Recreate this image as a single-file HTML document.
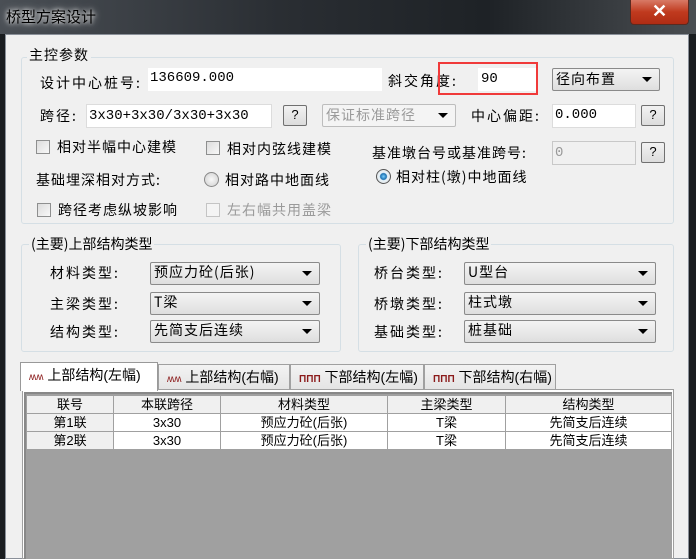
<!DOCTYPE html><html><head><meta charset="utf-8"><style>
*{margin:0;padding:0;box-sizing:border-box}
body{width:696px;height:559px;overflow:hidden;background:#1a1d20;font-family:"Liberation Sans","Noto Sans CJK SC",sans-serif;font-size:14px;color:#000;position:relative}
.a{position:absolute;white-space:nowrap}
.t{font-family:"Noto Sans CJK SC","WenQuanYi Zen Hei",sans-serif;font-size:14px;line-height:16px;letter-spacing:1px}
.m{font-family:"Liberation Mono","Noto Sans CJK SC",monospace;font-size:14px;line-height:16px}
.in{background:#fff;border:1px solid #dcdcdc}
.grp{border:1px solid #d5dfe5;border-radius:3px}
.lg{background:#f0f0f0;padding:0 2px}
.btn{border:1px solid #707070;border-radius:2px;background:linear-gradient(#f2f2f2,#dcdcdc);text-align:center;font-size:13px;line-height:18px}
.dd{border:1px solid #8a8a8a;border-radius:2px;background:linear-gradient(#f4f4f4,#dedede);padding-left:3px;line-height:19px}
.dd:after{content:"";position:absolute;right:7px;top:8px;border:5px solid transparent;border-top:5px solid #000;border-bottom:0}
.cb{width:14px;height:14px;border:1px solid #8e8f8f;background:linear-gradient(135deg,#dcdcdc,#f8f8f8)}
.tab{border:1px solid #a0a0a0;border-bottom:0;background:linear-gradient(#f3f3f3,#e4e4e4);height:25px;line-height:24px;padding-left:8px;font-size:14px}
table{border-collapse:collapse;font-size:13px;font-family:"Liberation Sans","Noto Sans CJK SC",sans-serif}
td{border:1px solid #a0a0a0;text-align:center;height:18px;line-height:16px;padding:0;background:#fff}
tr.h td{background:#f0f0f0}
</style></head><body>
<div class="a" style="left:0;top:0;width:696px;height:34px;background:linear-gradient(90deg,#4a4f55 0%,#2a2e33 40%,#1e2226 70%,#4a4e52 100%)"></div>
<div class="a t" style="left:6px;top:9px;color:#000;font-size:15px;letter-spacing:0;text-shadow:0 0 4px #fff,0 0 8px #ddd">桥型方案设计</div>
<div class="a" style="left:630px;top:0;width:59px;height:25px;border:1px solid #5a2a20;border-top:0;border-radius:0 0 4px 4px;background:linear-gradient(#d87a66,#c03a1e 50%,#b02c14);color:#fff;font-size:18px;font-weight:bold;text-align:center;line-height:22px">✕</div>
<div class="a" style="left:5px;top:34px;width:684px;height:525px;background:#f0f0f0;border:1px solid #8a9099"></div>

<div class="a grp" style="left:21px;top:57px;width:653px;height:167px"></div>
<div class="a t lg" style="left:27px;top:47px">主控参数</div>
<div class="a t" style="left:40px;top:75px;letter-spacing:2px">设计中心桩号:</div>
<div class="a in" style="left:148px;top:68px;width:234px;height:23px;border:0"></div>
<div class="a m" style="left:150px;top:70px">136609.000</div>
<div class="a t" style="left:388px;top:73px;letter-spacing:2px">斜交角度:</div>
<div class="a in" style="left:478px;top:68px;width:58px;height:23px;border:0"></div>
<div class="a m" style="left:481px;top:71px">90</div>
<div class="a" style="left:438px;top:62px;width:100px;height:33px;border:2px solid #f03a3a"></div>
<div class="a dd t" style="left:552px;top:68px;width:108px;height:23px;line-height:21px">径向布置</div>

<div class="a t" style="left:40px;top:108px;letter-spacing:2px">跨径:</div>
<div class="a in" style="left:86px;top:104px;width:186px;height:24px"></div>
<div class="a m" style="left:89px;top:108px">3x30+3x30/3x30+3x30</div>
<div class="a btn" style="left:283px;top:105px;width:24px;height:21px">?</div>
<div class="a dd t" style="left:322px;top:104px;width:134px;height:23px;color:#9a9a9a;border-color:#bdbdbd;background:#f4f4f4;line-height:21px">保证标准跨径</div>
<div class="a t" style="left:471px;top:108px;letter-spacing:2px">中心偏距:</div>
<div class="a in" style="left:552px;top:104px;width:84px;height:24px"></div>
<div class="a m" style="left:555px;top:107px">0.000</div>
<div class="a btn" style="left:641px;top:105px;width:24px;height:21px">?</div>

<div class="a cb" style="left:36px;top:140px"></div>
<div class="a t" style="left:57px;top:139px">相对半幅中心建模</div>
<div class="a cb" style="left:206px;top:141px"></div>
<div class="a t" style="left:227px;top:141px">相对内弦线建模</div>
<div class="a t" style="left:372px;top:145px">基准墩台号或基准跨号:</div>
<div class="a in" style="left:552px;top:141px;width:84px;height:24px;background:#f0f0f0;border-color:#c8c8c8"></div>
<div class="a m" style="left:555px;top:145px;color:#999">0</div>
<div class="a btn" style="left:641px;top:142px;width:24px;height:21px">?</div>

<div class="a t" style="left:36px;top:172px">基础埋深相对方式:</div>
<div class="a" style="left:204px;top:172px;width:15px;height:15px;border-radius:50%;border:1px solid #888;background:radial-gradient(#f8f8f8,#d0d0d0)"></div>
<div class="a t" style="left:225px;top:172px">相对路中地面线</div>
<div class="a" style="left:376px;top:169px;width:15px;height:15px;border-radius:50%;border:1px solid #555;background:radial-gradient(#7ad0ff 0,#1a6fb0 3px,#eaf4fa 4px,#d8d8d8)"></div>
<div class="a t" style="left:396px;top:169px">相对柱(墩)中地面线</div>

<div class="a cb" style="left:37px;top:203px"></div>
<div class="a t" style="left:58px;top:202px">跨径考虑纵坡影响</div>
<div class="a cb" style="left:206px;top:203px;background:#f4f4f4;border-color:#c4c4c4"></div>
<div class="a t" style="left:227px;top:202px;color:#9a9a9a">左右幅共用盖梁</div>

<div class="a grp" style="left:21px;top:244px;width:320px;height:108px"></div>
<div class="a t lg" style="left:29px;top:236px;letter-spacing:0">(主要)上部结构类型</div>
<div class="a t" style="left:50px;top:265px;letter-spacing:2px">材料类型:</div>
<div class="a dd t" style="left:150px;top:262px;width:170px;height:23px">预应力砼(后张)</div>
<div class="a t" style="left:50px;top:296px;letter-spacing:2px">主梁类型:</div>
<div class="a dd t" style="left:150px;top:292px;width:170px;height:23px">T梁</div>
<div class="a t" style="left:50px;top:324px;letter-spacing:2px">结构类型:</div>
<div class="a dd t" style="left:150px;top:320px;width:170px;height:23px">先简支后连续</div>

<div class="a grp" style="left:358px;top:244px;width:316px;height:108px"></div>
<div class="a t lg" style="left:366px;top:236px;letter-spacing:0">(主要)下部结构类型</div>
<div class="a t" style="left:374px;top:265px;letter-spacing:2px">桥台类型:</div>
<div class="a dd t" style="left:464px;top:262px;width:192px;height:23px">U型台</div>
<div class="a t" style="left:374px;top:296px;letter-spacing:2px">桥墩类型:</div>
<div class="a dd t" style="left:464px;top:292px;width:192px;height:23px">柱式墩</div>
<div class="a t" style="left:374px;top:324px;letter-spacing:2px">基础类型:</div>
<div class="a dd t" style="left:464px;top:320px;width:192px;height:23px">桩基础</div>

<div class="a tab" style="left:158px;top:364px;width:132px"><span style="color:#8b1a1a;font-size:10px">ʍʍ</span> 上部结构(右幅)</div>
<div class="a tab" style="left:290px;top:364px;width:134px"><span style="color:#8b1a1a;font-size:10px;font-weight:bold">ΠΠΠ</span> 下部结构(左幅)</div>
<div class="a tab" style="left:424px;top:364px;width:132px"><span style="color:#8b1a1a;font-size:10px;font-weight:bold">ΠΠΠ</span> 下部结构(右幅)</div>
<div class="a" style="left:22px;top:389px;width:652px;height:170px;background:#fff;border:1px solid #a0a0a0"></div>
<div class="a tab" style="left:20px;top:362px;width:138px;height:29px;background:#fff;border-color:#999"><span style="color:#8b1a1a;font-size:10px">ʍʍ</span> 上部结构(左幅)</div>
<div class="a" style="left:24px;top:392px;width:648px;height:167px;background:#a0a0a0;border-top:2px solid #888;border-left:2px solid #888"></div>
<table class="a" style="left:26px;top:395px">
<tr class="h"><td style="width:87px">联号</td><td style="width:107px">本联跨径</td><td style="width:167px">材料类型</td><td style="width:118px">主梁类型</td><td style="width:166px">结构类型</td></tr>
<tr><td style="background:#f0f0f0">第1联</td><td>3x30</td><td>预应力砼(后张)</td><td>T梁</td><td>先简支后连续</td></tr>
<tr><td style="background:#f0f0f0">第2联</td><td>3x30</td><td>预应力砼(后张)</td><td>T梁</td><td>先简支后连续</td></tr>
</table>
</body></html>
